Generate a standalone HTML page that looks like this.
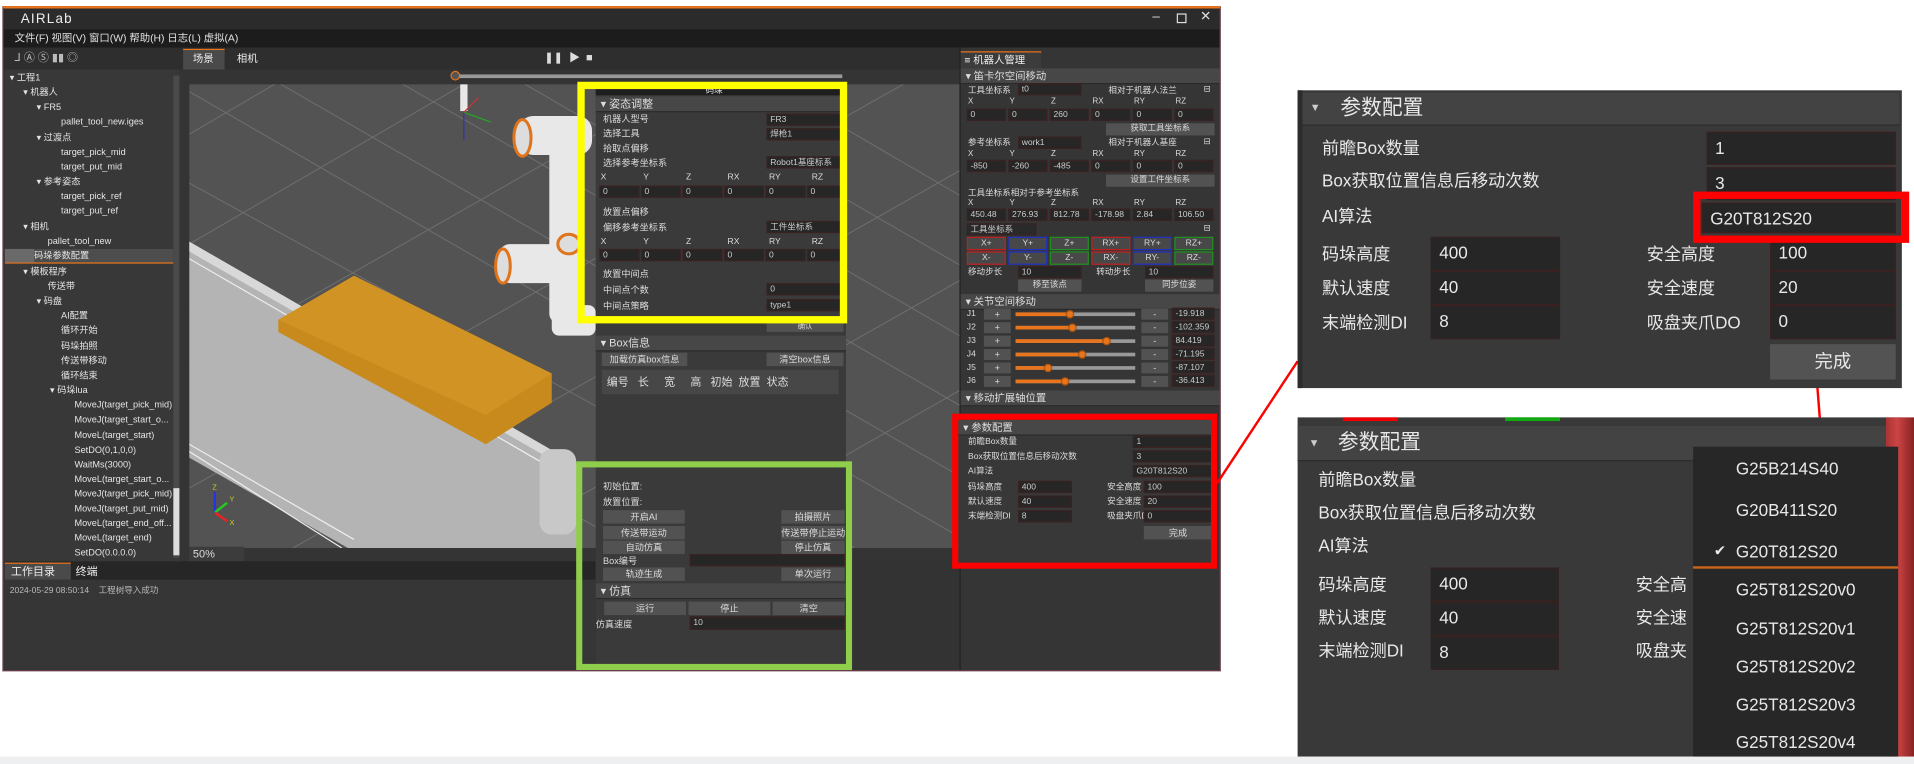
<!DOCTYPE html>
<html><head><meta charset="utf-8">
<style>
*{margin:0;padding:0;box-sizing:border-box}
html,body{width:1914px;height:764px;overflow:hidden;background:#fff;font-family:"Liberation Sans","Noto Sans CJK SC",sans-serif}
#w{position:absolute;left:0;top:0;width:1568px;height:626px;transform:scale(1.2207,1.2204);transform-origin:0 0}
.a{position:absolute}
.t{position:absolute;color:#ddd;font-size:7.5px;white-space:nowrap;line-height:1}
.in{position:absolute;background:#262626;border:1px solid #3a2222;color:#ccc;font-size:7px;padding-left:2px;line-height:9px;white-space:nowrap;overflow:hidden}
.bt{position:absolute;background:#525252;color:#ddd;text-align:center;font-size:7.5px;line-height:11px;white-space:nowrap;overflow:hidden}
.hd{position:absolute;background:#474747;color:#ddd;font-size:9px;line-height:12px;padding-left:4px;border-bottom:1px solid #2a2a2a}
.tr{position:absolute;color:#e6e6e6;font-size:7.5px;white-space:nowrap;line-height:1}
.jb{position:absolute;background:#484848;color:#ddd;font-size:7px;text-align:center;line-height:9px;border:1px solid}
.big{position:absolute;color:#e8e8e8;font-size:14px;white-space:nowrap;line-height:1}
.bin{position:absolute;background:#262626;border:1px solid #3a2020;color:#e8e8e8;font-size:14px;padding-left:6px;line-height:24px}
</style></head><body><div id="w">

<!-- APP WINDOW -->
<div class="a" style="left:2px;top:5px;width:998px;height:545px;background:#333;border:1px solid #6a3a4a;border-top:2px solid #e8741c"></div>
<div class="a" style="left:3px;top:7px;width:996px;height:17px;background:#2b2b2b"></div>
<div class="t" style="left:17px;top:11px;font-size:11px;color:#eee;letter-spacing:1px">AIRLab</div>
<div class="t" style="left:944px;top:9px;font-size:11px;color:#ddd">–</div>
<div class="a" style="left:964px;top:11px;width:8px;height:8px;border:1.3px solid #ddd"></div>
<div class="t" style="left:983px;top:9px;font-size:11px;color:#ddd">✕</div>
<div class="a" style="left:3px;top:24px;width:996px;height:15px;background:#1c1c1c"></div>
<div class="t" style="left:12px;top:27px;font-size:8.5px;color:#e0e0e0">文件(F) 视图(V) 窗口(W) 帮助(H) 日志(L) 虚拟(A)</div>
<div class="a" style="left:3px;top:39px;width:783px;height:18px;background:#2e2e2e"></div>
<div class="t" style="left:12px;top:43px;font-size:9px;color:#bbb">⅃ Ⓐ Ⓢ ▮▮ ◎</div>
<div class="a" style="left:150px;top:40px;width:34px;height:17px;background:#4a4a4a;border-top:1px solid #e8741c"></div>
<div class="t" style="left:158px;top:44px;font-size:8.5px;color:#eee">场景</div>
<div class="t" style="left:194px;top:44px;font-size:8.5px;color:#eee">相机</div>
<div class="t" style="left:446px;top:43px;font-size:9px;color:#ddd">❚❚ &nbsp;▶ &nbsp;■</div>

<!-- left tree -->
<div class="a" style="left:4px;top:57px;width:143px;height:403px;background:#383838"></div>
<div class="a" style="left:142px;top:62px;width:5px;height:395px;background:#4a4a4a"></div>
<div class="a" style="left:142px;top:400px;width:5px;height:55px;background:#ddd"></div>
<div class="a" style="left:4px;top:204px;width:138px;height:12px;background:#4d4d4d;border-bottom:1px solid #e8741c"></div>
<div class="a" style="left:4px;top:204px;width:24px;height:11px;background:#6a6a6a"></div>
<div class="tr" style="left:8px;top:60px">▾ 工程1</div>
<div class="tr" style="left:19px;top:72px">▾ 机器人</div>
<div class="tr" style="left:30px;top:84px">▾ FR5</div>
<div class="tr" style="left:50px;top:96px">pallet_tool_new.iges</div>
<div class="tr" style="left:30px;top:109px">▾ 过渡点</div>
<div class="tr" style="left:50px;top:121px">target_pick_mid</div>
<div class="tr" style="left:50px;top:133px">target_put_mid</div>
<div class="tr" style="left:30px;top:145px">▾ 参考姿态</div>
<div class="tr" style="left:50px;top:157px">target_pick_ref</div>
<div class="tr" style="left:50px;top:169px">target_put_ref</div>
<div class="tr" style="left:19px;top:182px">▾ 相机</div>
<div class="tr" style="left:39px;top:194px">pallet_tool_new</div>
<div class="tr" style="left:28px;top:206px">码垛参数配置</div>
<div class="tr" style="left:19px;top:219px">▾ 模板程序</div>
<div class="tr" style="left:39px;top:231px">传送带</div>
<div class="tr" style="left:30px;top:243px">▾ 码盘</div>
<div class="tr" style="left:50px;top:255px">AI配置</div>
<div class="tr" style="left:50px;top:267px">循环开始</div>
<div class="tr" style="left:50px;top:280px">码垛拍照</div>
<div class="tr" style="left:50px;top:292px">传送带移动</div>
<div class="tr" style="left:50px;top:304px">循环结束</div>
<div class="tr" style="left:41px;top:316px">▾ 码垛lua</div>
<div class="tr" style="left:61px;top:328px">MoveJ(target_pick_mid)</div>
<div class="tr" style="left:61px;top:340px">MoveJ(target_start_o...</div>
<div class="tr" style="left:61px;top:353px">MoveL(target_start)</div>
<div class="tr" style="left:61px;top:365px">SetDO(0,1,0,0)</div>
<div class="tr" style="left:61px;top:377px">WaitMs(3000)</div>
<div class="tr" style="left:61px;top:389px">MoveL(target_start_o...</div>
<div class="tr" style="left:61px;top:401px">MoveJ(target_pick_mid)</div>
<div class="tr" style="left:61px;top:413px">MoveJ(target_put_mid)</div>
<div class="tr" style="left:61px;top:425px">MoveL(target_end_off...</div>
<div class="tr" style="left:61px;top:437px">MoveL(target_end)</div>
<div class="tr" style="left:61px;top:449px">SetDO(0.0.0.0)</div>

<!-- viewport -->
<div class="a" style="left:147px;top:57px;width:639px;height:403px;background:#343434"></div>
<div class="a" style="left:374px;top:61px;width:316px;height:3px;background:#9a9a9a"></div>
<div class="a" style="left:369px;top:58px;width:8px;height:8px;border:1.5px solid #e8741c;border-radius:50%;background:#555"></div>
<svg class="a" style="left:155px;top:69px" width="631" height="380" viewBox="155 69 631 380">
<rect x="155" y="69" width="631" height="380" fill="#535353"/>
<g stroke="#6f6f6f" stroke-width="0.8">
<line x1="155" y1="75" x2="786" y2="440"/><line x1="230" y1="69" x2="786" y2="390"/><line x1="330" y1="69" x2="786" y2="332"/><line x1="430" y1="69" x2="786" y2="275"/><line x1="530" y1="69" x2="786" y2="217"/><line x1="630" y1="69" x2="786" y2="160"/><line x1="155" y1="150" x2="700" y2="449"/><line x1="155" y1="250" x2="520" y2="449"/>
<line x1="155" y1="300" x2="560" y2="69"/><line x1="155" y1="400" x2="740" y2="69"/><line x1="240" y1="449" x2="786" y2="140"/><line x1="400" y1="449" x2="786" y2="230"/><line x1="560" y1="449" x2="786" y2="320"/><line x1="155" y1="200" x2="380" y2="69"/><line x1="155" y1="110" x2="225" y2="69"/>
</g>
<polygon points="155,198 475,382 475,449 285,449 155,375" fill="#b4b4b4"/>
<polygon points="155,198 475,382 475,390 155,206" fill="#d8d8d8"/>
<g stroke="#eee" stroke-width="1"><line x1="155" y1="212" x2="470" y2="394"/><line x1="155" y1="364" x2="290" y2="442"/><line x1="155" y1="370" x2="280" y2="449"/></g>
<polygon points="228,262 290,226 452,306 452,330 398,364 228,272" fill="#c88a1c"/>
<polygon points="228,262 290,226 452,306 398,340" fill="#d19424"/>
<rect x="442" y="368" width="30" height="70" rx="10" fill="#c8c8c8"/>
<g fill="#e8e8e8">
<rect x="377" y="69" width="6" height="22"/>
<rect x="425" y="95" width="60" height="32" rx="12"/>
<rect x="450" y="115" width="24" height="150" rx="8"/>
<rect x="408" y="200" width="62" height="32" rx="10"/>
<rect x="452" y="250" width="36" height="25" rx="6"/>
</g>
<g fill="#ddd" stroke="#e0741c" stroke-width="2.5">
<ellipse cx="428" cy="113" rx="7" ry="15"/><ellipse cx="412" cy="218" rx="6" ry="14"/><ellipse cx="466" cy="200" rx="9" ry="8"/>
</g>
<line x1="380" y1="92" x2="380" y2="115" stroke="#33a" stroke-width="1"/><line x1="380" y1="92" x2="402" y2="100" stroke="#2a2" stroke-width="1"/><line x1="380" y1="92" x2="392" y2="80" stroke="#c33" stroke-width="1"/>
<line x1="176" y1="420" x2="176" y2="403" stroke="#23e" stroke-width="2"/><line x1="176" y1="420" x2="186" y2="412" stroke="#2c2" stroke-width="2"/><line x1="176" y1="420" x2="186" y2="427" stroke="#e22" stroke-width="2"/>
<text x="174" y="401" fill="#cc2" font-size="6">Z</text><text x="188" y="411" fill="#cc2" font-size="6">Y</text><text x="188" y="430" fill="#cc2" font-size="6">X</text>
</svg>
<div class="a" style="left:155px;top:448px;width:45px;height:12px;background:#3c3c3c"></div>
<div class="t" style="left:158px;top:450px;font-size:9px;color:#ddd">50%</div>

<!-- bottom -->
<div class="a" style="left:4px;top:460px;width:484px;height:15px;background:#262626"></div>
<div class="a" style="left:4px;top:461px;width:54px;height:14px;background:#4a4a4a;border-top:1px solid #e8741c"></div>
<div class="t" style="left:9px;top:464px;font-size:9px;color:#eee">工作目录</div>
<div class="t" style="left:62px;top:464px;font-size:9px;color:#eee">终端</div>
<div class="a" style="left:4px;top:475px;width:484px;height:73px;background:#363636"></div>
<div class="t" style="left:8px;top:481px;font-size:7px;color:#bbb">2024-05-29 08:50:14 &nbsp;&nbsp;&nbsp;工程树导入成功</div>

<!-- middle panel -->
<div class="a" style="left:488px;top:70px;width:205px;height:479px;background:#3a3a3a"></div>
<div class="a" style="left:488px;top:70px;width:205px;height:8px;background:#1e1e1e"></div>
<div class="t" style="left:578px;top:71px;font-size:7px">码垛</div>
<div class="hd" style="left:488px;top:79px;width:205px">▾ 姿态调整</div>
<div class="t" style="left:494px;top:94px">机器人型号</div><div class="in" style="left:628px;top:93px;width:63px;height:10px">FR3</div>
<div class="t" style="left:494px;top:106px">选择工具</div><div class="in" style="left:628px;top:105px;width:63px;height:10px">焊枪1</div>
<div class="t" style="left:494px;top:118px">拾取点偏移</div>
<div class="t" style="left:494px;top:130px">选择参考坐标系</div><div class="in" style="left:628px;top:128px;width:63px;height:10px">Robot1基座标系</div>
<div class="t" style="left:492px;top:142px;font-size:7px">X</div><div class="t" style="left:527px;top:142px;font-size:7px">Y</div><div class="t" style="left:562px;top:142px;font-size:7px">Z</div><div class="t" style="left:596px;top:142px;font-size:7px">RX</div><div class="t" style="left:630px;top:142px;font-size:7px">RY</div><div class="t" style="left:665px;top:142px;font-size:7px">RZ</div>
<div class="in" style="left:491px;top:152px;width:33px;height:10px">0</div><div class="in" style="left:525px;top:152px;width:33px;height:10px">0</div><div class="in" style="left:559px;top:152px;width:33px;height:10px">0</div><div class="in" style="left:593px;top:152px;width:33px;height:10px">0</div><div class="in" style="left:627px;top:152px;width:33px;height:10px">0</div><div class="in" style="left:661px;top:152px;width:31px;height:10px">0</div>
<div class="t" style="left:494px;top:170px">放置点偏移</div>
<div class="t" style="left:494px;top:183px">偏移参考坐标系</div><div class="in" style="left:628px;top:181px;width:63px;height:10px">工件坐标系</div>
<div class="t" style="left:492px;top:195px;font-size:7px">X</div><div class="t" style="left:527px;top:195px;font-size:7px">Y</div><div class="t" style="left:562px;top:195px;font-size:7px">Z</div><div class="t" style="left:596px;top:195px;font-size:7px">RX</div><div class="t" style="left:630px;top:195px;font-size:7px">RY</div><div class="t" style="left:665px;top:195px;font-size:7px">RZ</div>
<div class="in" style="left:491px;top:204px;width:33px;height:10px">0</div><div class="in" style="left:525px;top:204px;width:33px;height:10px">0</div><div class="in" style="left:559px;top:204px;width:33px;height:10px">0</div><div class="in" style="left:593px;top:204px;width:33px;height:10px">0</div><div class="in" style="left:627px;top:204px;width:33px;height:10px">0</div><div class="in" style="left:661px;top:204px;width:31px;height:10px">0</div>
<div class="t" style="left:494px;top:221px">放置中间点</div>
<div class="t" style="left:494px;top:234px">中间点个数</div><div class="in" style="left:628px;top:232px;width:63px;height:10px">0</div>
<div class="t" style="left:494px;top:247px">中间点策略</div><div class="in" style="left:628px;top:245px;width:63px;height:10px">type1</div>
<div class="bt" style="left:628px;top:264px;width:63px;height:8px;line-height:8px;font-size:6px">确认</div>
<div class="hd" style="left:488px;top:275px;width:205px">▾ Box信息</div>
<div class="bt" style="left:493px;top:289px;width:70px">加载仿真box信息</div>
<div class="bt" style="left:628px;top:289px;width:63px">清空box信息</div>
<div class="a" style="left:493px;top:303px;width:194px;height:20px;background:#474747"></div>
<div class="t" style="left:497px;top:309px;font-size:9px;word-spacing:0">编号 &nbsp;&nbsp;长 &nbsp;&nbsp;&nbsp;&nbsp;宽 &nbsp;&nbsp;&nbsp;&nbsp;高 &nbsp;&nbsp;初始 &nbsp;放置 &nbsp;状态</div>
<div class="t" style="left:494px;top:395px">初始位置:</div>
<div class="t" style="left:494px;top:408px">放置位置:</div>
<div class="bt" style="left:494px;top:418px;width:67px">开启AI</div><div class="bt" style="left:640px;top:418px;width:52px">拍摄照片</div>
<div class="bt" style="left:494px;top:431px;width:67px">传送带运动</div><div class="bt" style="left:640px;top:431px;width:52px">传送带停止运动</div>
<div class="bt" style="left:494px;top:443px;width:67px">自动仿真</div><div class="bt" style="left:640px;top:443px;width:52px">停止仿真</div>
<div class="t" style="left:494px;top:456px">Box编号</div><div class="in" style="left:565px;top:454px;width:127px;height:10px"></div>
<div class="bt" style="left:494px;top:465px;width:67px">轨迹生成</div><div class="bt" style="left:640px;top:465px;width:52px">单次运行</div>
<div class="hd" style="left:488px;top:478px;width:205px">▾ 仿真</div>
<div class="bt" style="left:495px;top:493px;width:67px">运行</div><div class="bt" style="left:564px;top:493px;width:67px">停止</div><div class="bt" style="left:633px;top:493px;width:59px">清空</div>
<div class="t" style="left:488px;top:508px">仿真速度</div><div class="in" style="left:565px;top:505px;width:127px;height:11px">10</div>
<div class="a" style="left:473px;top:67px;width:221px;height:198px;border:6px solid #ffff00"></div>
<div class="a" style="left:472px;top:378px;width:226px;height:171px;border:5px solid #8fce4a"></div>

<!-- right dock -->
<div class="a" style="left:786px;top:39px;width:213px;height:510px;background:#353535;border-left:1px solid #222"></div>
<div class="a" style="left:787px;top:42px;width:66px;height:14px;background:#3c3c3c;border-top:1px solid #e8741c"></div>
<div class="t" style="left:790px;top:45px;font-size:8.5px;color:#eee">≡ 机器人管理</div>
<div class="hd" style="left:787px;top:56px;width:212px;font-size:8.5px">▾ 笛卡尔空间移动</div>
<div class="t" style="left:793px;top:71px;font-size:7px">工具坐标系</div><div class="in" style="left:834px;top:68px;width:52px;height:10px">t0</div><div class="t" style="left:908px;top:71px;font-size:7px">相对于机器人法兰</div><div class="t" style="left:986px;top:70px;font-size:7px">⊟</div>
<div class="t" style="left:793px;top:81px;font-size:6.5px">X</div><div class="t" style="left:827px;top:81px;font-size:6.5px">Y</div><div class="t" style="left:861px;top:81px;font-size:6.5px">Z</div><div class="t" style="left:895px;top:81px;font-size:6.5px">RX</div><div class="t" style="left:929px;top:81px;font-size:6.5px">RY</div><div class="t" style="left:963px;top:81px;font-size:6.5px">RZ</div>
<div class="in" style="left:792px;top:89px;width:32px;height:10px">0</div><div class="in" style="left:826px;top:89px;width:32px;height:10px">0</div><div class="in" style="left:860px;top:89px;width:32px;height:10px">260</div><div class="in" style="left:894px;top:89px;width:32px;height:10px">0</div><div class="in" style="left:928px;top:89px;width:32px;height:10px">0</div><div class="in" style="left:962px;top:89px;width:32px;height:10px">0</div>
<div class="bt" style="left:906px;top:101px;width:89px;height:10px;line-height:10px;font-size:7px">获取工具坐标系</div>
<div class="t" style="left:793px;top:114px;font-size:7px">参考坐标系</div><div class="in" style="left:834px;top:112px;width:52px;height:10px">work1</div><div class="t" style="left:908px;top:114px;font-size:7px">相对于机器人基座</div><div class="t" style="left:986px;top:113px;font-size:7px">⊟</div>
<div class="t" style="left:793px;top:124px;font-size:6.5px">X</div><div class="t" style="left:827px;top:124px;font-size:6.5px">Y</div><div class="t" style="left:861px;top:124px;font-size:6.5px">Z</div><div class="t" style="left:895px;top:124px;font-size:6.5px">RX</div><div class="t" style="left:929px;top:124px;font-size:6.5px">RY</div><div class="t" style="left:963px;top:124px;font-size:6.5px">RZ</div>
<div class="in" style="left:792px;top:131px;width:32px;height:10px">-850</div><div class="in" style="left:826px;top:131px;width:32px;height:10px">-260</div><div class="in" style="left:860px;top:131px;width:32px;height:10px">-485</div><div class="in" style="left:894px;top:131px;width:32px;height:10px">0</div><div class="in" style="left:928px;top:131px;width:32px;height:10px">0</div><div class="in" style="left:962px;top:131px;width:32px;height:10px">0</div>
<div class="bt" style="left:906px;top:143px;width:89px;height:10px;line-height:10px;font-size:7px">设置工件坐标系</div>
<div class="t" style="left:793px;top:155px;font-size:7px">工具坐标系相对于参考坐标系</div>
<div class="t" style="left:793px;top:164px;font-size:6.5px">X</div><div class="t" style="left:827px;top:164px;font-size:6.5px">Y</div><div class="t" style="left:861px;top:164px;font-size:6.5px">Z</div><div class="t" style="left:895px;top:164px;font-size:6.5px">RX</div><div class="t" style="left:929px;top:164px;font-size:6.5px">RY</div><div class="t" style="left:963px;top:164px;font-size:6.5px">RZ</div>
<div class="in" style="left:792px;top:171px;width:32px;height:10px">450.48</div><div class="in" style="left:826px;top:171px;width:32px;height:10px">276.93</div><div class="in" style="left:860px;top:171px;width:32px;height:10px">812.78</div><div class="in" style="left:894px;top:171px;width:32px;height:10px">-178.98</div><div class="in" style="left:928px;top:171px;width:32px;height:10px">2.84</div><div class="in" style="left:962px;top:171px;width:32px;height:10px">106.50</div>
<div class="in" style="left:792px;top:183px;width:57px;height:10px;background:#2a2a2a">工具坐标系</div><div class="t" style="left:986px;top:184px;font-size:7px">⊟</div>
<div class="jb" style="left:792px;top:194px;width:32px;height:11px;border-color:#c02020">X+</div><div class="jb" style="left:826px;top:194px;width:32px;height:11px;border-color:#2030c0">Y+</div><div class="jb" style="left:860px;top:194px;width:32px;height:11px;border-color:#209020">Z+</div><div class="jb" style="left:894px;top:194px;width:32px;height:11px;border-color:#c02020">RX+</div><div class="jb" style="left:928px;top:194px;width:32px;height:11px;border-color:#2030c0">RY+</div><div class="jb" style="left:962px;top:194px;width:32px;height:11px;border-color:#209020">RZ+</div>
<div class="jb" style="left:792px;top:206px;width:32px;height:11px;border-color:#c02020">X-</div><div class="jb" style="left:826px;top:206px;width:32px;height:11px;border-color:#2030c0">Y-</div><div class="jb" style="left:860px;top:206px;width:32px;height:11px;border-color:#209020">Z-</div><div class="jb" style="left:894px;top:206px;width:32px;height:11px;border-color:#c02020">RX-</div><div class="jb" style="left:928px;top:206px;width:32px;height:11px;border-color:#2030c0">RY-</div><div class="jb" style="left:962px;top:206px;width:32px;height:11px;border-color:#209020">RZ-</div>
<div class="t" style="left:793px;top:220px;font-size:7px">移动步长</div><div class="in" style="left:834px;top:218px;width:52px;height:10px">10</div><div class="t" style="left:898px;top:220px;font-size:7px">转动步长</div><div class="in" style="left:938px;top:218px;width:56px;height:10px">10</div>
<div class="bt" style="left:834px;top:229px;width:52px;height:10px;line-height:10px;font-size:7px">移至该点</div><div class="bt" style="left:938px;top:229px;width:56px;height:10px;line-height:10px;font-size:7px">同步位姿</div>
<div class="hd" style="left:787px;top:241px;width:212px;font-size:8.5px">▾ 关节空间移动</div>
<!-- joints -->
<div class="t" style="left:792px;top:254px;font-size:7px">J1</div><div class="bt" style="left:806px;top:253px;width:22px;height:9px;line-height:9px">+</div><div class="a" style="left:832px;top:256px;width:98px;height:3px;background:#999"></div><div class="a" style="left:832px;top:256px;width:45px;height:3px;background:#e8741c"></div><div class="a" style="left:873px;top:254px;width:7px;height:7px;border-radius:50%;background:#e8741c;border:1px solid #aa5510"></div><div class="bt" style="left:935px;top:253px;width:22px;height:9px;line-height:9px">-</div><div class="in" style="left:960px;top:252px;width:35px;height:10px">-19.918</div>
<div class="t" style="left:792px;top:265px;font-size:7px">J2</div><div class="bt" style="left:806px;top:264px;width:22px;height:9px;line-height:9px">+</div><div class="a" style="left:832px;top:267px;width:98px;height:3px;background:#999"></div><div class="a" style="left:832px;top:267px;width:47px;height:3px;background:#e8741c"></div><div class="a" style="left:875px;top:265px;width:7px;height:7px;border-radius:50%;background:#e8741c;border:1px solid #aa5510"></div><div class="bt" style="left:935px;top:264px;width:22px;height:9px;line-height:9px">-</div><div class="in" style="left:960px;top:263px;width:35px;height:10px">-102.359</div>
<div class="t" style="left:792px;top:276px;font-size:7px">J3</div><div class="bt" style="left:806px;top:275px;width:22px;height:9px;line-height:9px">+</div><div class="a" style="left:832px;top:278px;width:98px;height:3px;background:#999"></div><div class="a" style="left:832px;top:278px;width:75px;height:3px;background:#e8741c"></div><div class="a" style="left:903px;top:276px;width:7px;height:7px;border-radius:50%;background:#e8741c;border:1px solid #aa5510"></div><div class="bt" style="left:935px;top:275px;width:22px;height:9px;line-height:9px">-</div><div class="in" style="left:960px;top:274px;width:35px;height:10px">84.419</div>
<div class="t" style="left:792px;top:287px;font-size:7px">J4</div><div class="bt" style="left:806px;top:286px;width:22px;height:9px;line-height:9px">+</div><div class="a" style="left:832px;top:289px;width:98px;height:3px;background:#999"></div><div class="a" style="left:832px;top:289px;width:55px;height:3px;background:#e8741c"></div><div class="a" style="left:883px;top:287px;width:7px;height:7px;border-radius:50%;background:#e8741c;border:1px solid #aa5510"></div><div class="bt" style="left:935px;top:286px;width:22px;height:9px;line-height:9px">-</div><div class="in" style="left:960px;top:285px;width:35px;height:10px">-71.195</div>
<div class="t" style="left:792px;top:298px;font-size:7px">J5</div><div class="bt" style="left:806px;top:297px;width:22px;height:9px;line-height:9px">+</div><div class="a" style="left:832px;top:300px;width:98px;height:3px;background:#999"></div><div class="a" style="left:832px;top:300px;width:27px;height:3px;background:#e8741c"></div><div class="a" style="left:855px;top:298px;width:7px;height:7px;border-radius:50%;background:#e8741c;border:1px solid #aa5510"></div><div class="bt" style="left:935px;top:297px;width:22px;height:9px;line-height:9px">-</div><div class="in" style="left:960px;top:296px;width:35px;height:10px">-87.107</div>
<div class="t" style="left:792px;top:309px;font-size:7px">J6</div><div class="bt" style="left:806px;top:308px;width:22px;height:9px;line-height:9px">+</div><div class="a" style="left:832px;top:311px;width:98px;height:3px;background:#999"></div><div class="a" style="left:832px;top:311px;width:41px;height:3px;background:#e8741c"></div><div class="a" style="left:869px;top:309px;width:7px;height:7px;border-radius:50%;background:#e8741c;border:1px solid #aa5510"></div><div class="bt" style="left:935px;top:308px;width:22px;height:9px;line-height:9px">-</div><div class="in" style="left:960px;top:307px;width:35px;height:10px">-36.413</div>
<div class="hd" style="left:787px;top:320px;width:212px;font-size:8.5px">▾ 移动扩展轴位置</div>
<!-- in-app param config -->
<div class="a" style="left:785px;top:344px;width:210px;height:120px;background:#383838"></div>
<div class="hd" style="left:785px;top:344px;width:210px;font-size:8.5px">▾ 参数配置</div>
<div class="t" style="left:793px;top:359px;font-size:7px">前瞻Box数量</div><div class="in" style="left:928px;top:357px;width:65px;height:10px">1</div>
<div class="t" style="left:793px;top:371px;font-size:7px">Box获取位置信息后移动次数</div><div class="in" style="left:928px;top:369px;width:65px;height:10px">3</div>
<div class="t" style="left:793px;top:383px;font-size:7px">AI算法</div><div class="in" style="left:928px;top:381px;width:65px;height:10px">G20T812S20</div>
<div class="t" style="left:793px;top:396px;font-size:7px">码垛高度</div><div class="in" style="left:834px;top:394px;width:44px;height:10px">400</div><div class="t" style="left:907px;top:396px;font-size:7px">安全高度</div><div class="in" style="left:937px;top:394px;width:56px;height:10px">100</div>
<div class="t" style="left:793px;top:408px;font-size:7px">默认速度</div><div class="in" style="left:834px;top:406px;width:44px;height:10px">40</div><div class="t" style="left:907px;top:408px;font-size:7px">安全速度</div><div class="in" style="left:937px;top:406px;width:56px;height:10px">20</div>
<div class="t" style="left:793px;top:420px;font-size:7px">末端检测DI</div><div class="in" style="left:834px;top:418px;width:44px;height:10px">8</div><div class="t" style="left:907px;top:420px;font-size:7px">吸盘夹爪DO</div><div class="in" style="left:937px;top:418px;width:56px;height:10px">0</div>
<div class="bt" style="left:937px;top:431px;width:56px;height:11px">完成</div>
<div class="a" style="left:780px;top:339px;width:217px;height:127px;border:5px solid #ff0000"></div>

<!-- connector lines -->
<svg class="a" style="left:0;top:0" width="1568" height="626"><line x1="997" y1="396" x2="1063" y2="296" stroke="#f00" stroke-width="2"/><line x1="1479" y1="192" x2="1492" y2="358" stroke="#f00" stroke-width="2"/></svg>

<!-- right panel 1 -->
<div class="a" style="left:1063px;top:74px;width:495px;height:244px;background:#393939;border-left:4px solid #2c2c2c"></div>
<div class="a" style="left:1067px;top:76px;width:489px;height:27px;background:#434343;border-bottom:1px solid #2a2a2a"></div>
<div class="big" style="left:1073px;top:84px;font-size:9px;color:#ccc">▼</div><div class="big" style="left:1098px;top:80px;font-size:17px">参数配置</div>
<div class="big" style="left:1083px;top:114px">前瞻Box数量</div><div class="bin" style="left:1398px;top:108px;width:155px;height:27px">1</div>
<div class="big" style="left:1083px;top:141px">Box获取位置信息后移动次数</div><div class="bin" style="left:1398px;top:137px;width:155px;height:27px">3</div>
<div class="big" style="left:1083px;top:170px">AI算法</div><div class="bin" style="left:1394px;top:166px;width:159px;height:25px">G20T812S20</div>
<div class="big" style="left:1083px;top:201px">码垛高度</div><div class="bin" style="left:1172px;top:194px;width:106px;height:28px">400</div><div class="big" style="left:1349px;top:201px">安全高度</div><div class="bin" style="left:1450px;top:194px;width:103px;height:28px">100</div>
<div class="big" style="left:1083px;top:229px">默认速度</div><div class="bin" style="left:1172px;top:222px;width:106px;height:28px">40</div><div class="big" style="left:1349px;top:229px">安全速度</div><div class="bin" style="left:1450px;top:222px;width:103px;height:28px">20</div>
<div class="big" style="left:1083px;top:257px">末端检测DI</div><div class="bin" style="left:1172px;top:250px;width:106px;height:28px">8</div><div class="big" style="left:1349px;top:257px">吸盘夹爪DO</div><div class="bin" style="left:1450px;top:250px;width:103px;height:28px">0</div>
<div class="a" style="left:1450px;top:282px;width:103px;height:29px;background:#535353;color:#e8e8e8;font-size:15px;text-align:center;line-height:29px">完成</div>
<div class="a" style="left:1387px;top:157px;width:177px;height:42px;border:6px solid #ff0000"></div>

<!-- right panel 2 -->
<div class="a" style="left:1063px;top:342px;width:495px;height:278px;background:#393939"></div>
<div class="a" style="left:1100px;top:342px;width:45px;height:3px;background:#e00"></div><div class="a" style="left:1233px;top:342px;width:45px;height:3px;background:#1a1"></div>
<div class="a" style="left:1063px;top:349px;width:495px;height:29px;background:#434343;border-bottom:1px solid #2a2a2a"></div>
<div class="big" style="left:1072px;top:359px;font-size:9px;color:#ccc">▼</div><div class="big" style="left:1096px;top:354px;font-size:17px">参数配置</div>
<div class="big" style="left:1080px;top:386px">前瞻Box数量</div>
<div class="big" style="left:1080px;top:413px">Box获取位置信息后移动次数</div>
<div class="big" style="left:1080px;top:440px">AI算法</div>
<div class="big" style="left:1080px;top:472px">码垛高度</div><div class="bin" style="left:1172px;top:465px;width:105px;height:28px">400</div>
<div class="big" style="left:1080px;top:499px">默认速度</div><div class="bin" style="left:1172px;top:493px;width:105px;height:28px">40</div>
<div class="big" style="left:1080px;top:526px">末端检测DI</div><div class="bin" style="left:1172px;top:521px;width:105px;height:28px">8</div>
<div class="big" style="left:1340px;top:472px">安全高</div><div class="big" style="left:1340px;top:499px">安全速</div><div class="big" style="left:1340px;top:526px">吸盘夹</div>
<div class="a" style="left:1545px;top:342px;width:23px;height:278px;background:linear-gradient(90deg,#a33,#c44 40%,#822)"></div>
<div class="a" style="left:1387px;top:366px;width:168px;height:254px;background:#272727"></div>
<div class="big" style="left:1422px;top:377px">G25B214S40</div>
<div class="big" style="left:1422px;top:411px">G20B411S20</div>
<div class="big" style="left:1404px;top:445px;font-size:12px">✔</div><div class="big" style="left:1422px;top:445px">G20T812S20</div>
<div class="a" style="left:1387px;top:464px;width:168px;height:2px;background:#c8661a"></div>
<div class="big" style="left:1422px;top:476px">G25T812S20v0</div>
<div class="big" style="left:1422px;top:508px">G25T812S20v1</div>
<div class="big" style="left:1422px;top:539px">G25T812S20v2</div>
<div class="big" style="left:1422px;top:570px">G25T812S20v3</div>
<div class="big" style="left:1422px;top:601px">G25T812S20v4</div>
<div class="a" style="left:0;top:620px;width:1568px;height:6px;background:#eeeff1"></div>
</div></body></html>
